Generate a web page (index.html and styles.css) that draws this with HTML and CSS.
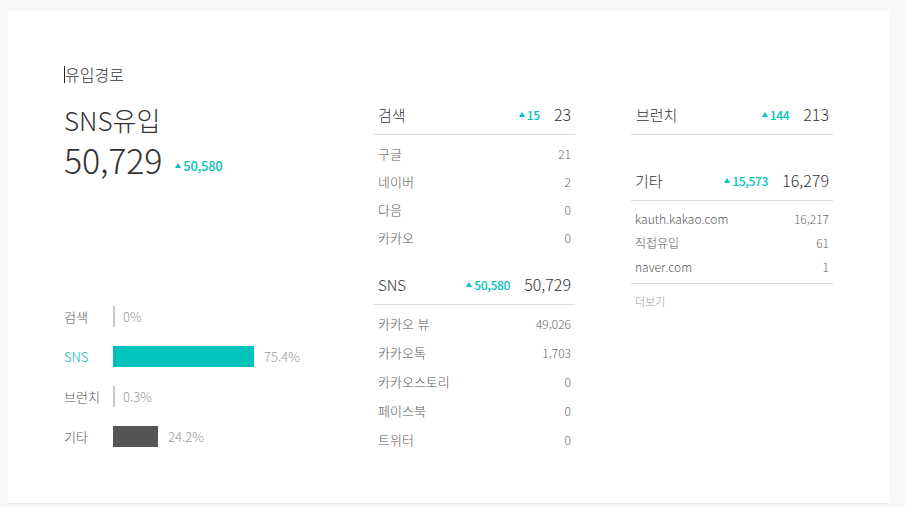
FILE: index.html
```html
<!DOCTYPE html>
<html lang="ko">
<head>
<meta charset="utf-8">
<link rel="stylesheet" href="styles.css">
</head>
<body>
<div class="card">
  <h2 class="title">유입경로</h2>
  <div class="grid">
    <div class="summary">
      <div class="sum-label">SNS유입</div>
      <div class="sum-value"><span class="big">50,729</span><span class="delta"><i class="tri"></i>50,580</span></div>
      <div class="chart">
        <div class="bar-row"><span class="bar-label">검색</span><span class="bar zero"></span><span class="pct">0%</span></div>
        <div class="bar-row active"><span class="bar-label">SNS</span><span class="bar teal" style="width:141px"></span><span class="pct">75.4%</span></div>
        <div class="bar-row"><span class="bar-label">브런치</span><span class="bar zero"></span><span class="pct">0.3%</span></div>
        <div class="bar-row"><span class="bar-label">기타</span><span class="bar dark" style="width:45px"></span><span class="pct">24.2%</span></div>
      </div>
    </div>

    <div class="col">
      <div class="section">
        <div class="head"><span class="head-label">검색</span><span class="delta"><i class="tri"></i>15</span><span class="total">23</span></div>
        <ul class="list">
          <li><span>구글</span><span>21</span></li>
          <li><span>네이버</span><span>2</span></li>
          <li><span>다음</span><span>0</span></li>
          <li><span>카카오</span><span>0</span></li>
        </ul>
      </div>
      <div class="section second">
        <div class="head"><span class="head-label">SNS</span><span class="delta"><i class="tri"></i>50,580</span><span class="total">50,729</span></div>
        <ul class="list tall">
          <li><span>카카오 뷰</span><span>49,026</span></li>
          <li><span>카카오톡</span><span>1,703</span></li>
          <li><span>카카오스토리</span><span>0</span></li>
          <li><span>페이스북</span><span>0</span></li>
          <li><span>트위터</span><span>0</span></li>
        </ul>
      </div>
    </div>

    <div class="col">
      <div class="section">
        <div class="head"><span class="head-label">브런치</span><span class="delta"><i class="tri"></i>144</span><span class="total">213</span></div>
      </div>
      <div class="section etc">
        <div class="head"><span class="head-label">기타</span><span class="delta"><i class="tri"></i>15,573</span><span class="total">16,279</span></div>
        <ul class="list small">
          <li><span>kauth.kakao.com</span><span>16,217</span></li>
          <li><span>직접유입</span><span>61</span></li>
          <li><span>naver.com</span><span>1</span></li>
        </ul>
        <a class="more">더보기</a>
      </div>
    </div>
  </div>
</div>
</body>
</html>
```

FILE: styles.css
```css
* { box-sizing: border-box; }
html, body { margin: 0; padding: 0; }
body {
  background: #f7f7f7;
  padding: 11px 16px 0 8px;
  font-family: "Noto Sans CJK KR", "Noto Sans", sans-serif;
  font-weight: 300;
  color: #333;
}
.card {
  background: #fff;
  height: 493px;
  border-bottom: 1px solid #ebebeb;
  padding: 55px 56px 0 56px;
}
.title {
  margin: 0;
  font-size: 16px;
  font-weight: 300;
  line-height: 17px;
  height: 17px;
  color: #333;
  border-left: 1px solid #222;
  padding-left: 0;
  display: block;
  width: fit-content;
}
.grid {
  display: grid;
  grid-template-columns: 253px 202px 202px;
  column-gap: 56px;
  margin-top: 11px;
}
.summary { padding-top: 9px; }
.sum-label { font-size: 26px; line-height: 34px; color: #333; }
.sum-value { display: flex; align-items: center; height: 46px; }
.big { font-size: 34px; line-height: 46px; color: #333; letter-spacing: -0.2px; }
.sum-value .delta { margin-left: 13px; margin-top: 10px; font-size: 13px; }
.delta {
  color: #00c3bb;
  font-size: 12px;
  font-weight: 500;
  display: inline-flex;
  align-items: center;
  letter-spacing: -0.3px;
}
.tri {
  display: inline-block;
  width: 0; height: 0;
  border-left: 3px solid transparent;
  border-right: 3px solid transparent;
  border-bottom: 5px solid #00c3bb;
  margin-right: 2px;
}
.chart { margin-top: 113px; }
.bar-row { display: flex; align-items: center; height: 40px; font-size: 13px; }
.bar-label { width: 49px; color: #555; }
.bar-row.active .bar-label { color: #00b8b0; }
.bar { height: 21px; display: inline-block; }
.bar.zero { width: 2px; background: #c8c8c8; }
.bar.teal { background: #00c4bc; }
.bar.dark { background: #555; }
.pct { margin-left: 10px; color: #999; }
.bar.zero + .pct { margin-left: 8px; }

.head {
  display: flex;
  align-items: center;
  height: 41px;
  padding: 0 4px 0 5px;
  border-bottom: 1px solid #ddd;
}
.head-label { font-size: 15px; color: #333; flex: 1; }
.head .delta { margin-right: 14px; }
.total { font-size: 16px; color: #333; }
.list { list-style: none; margin: 0; padding: 4px 4px 0 5px; }
.list li { display: flex; justify-content: space-between; height: 28px; align-items: center; font-size: 13px; color: #5a5a5a; }
.list.tall li { height: 29px; }
.list li span:last-child { font-size: 12px; color: #666; }
.section.second { margin-top: 13px; }
.section.etc { margin-top: 25px; }
.list.small { padding: 5px 4px 5px 4px; border-bottom: 1px solid #ddd; }
.list.small li { height: 24px; font-size: 12px; }
.list.small li span:last-child { font-size: 12px; }
.etc .head { padding-left: 4px; }
.more { display: block; margin-top: 9px; margin-left: 4px; font-size: 11px; line-height: 16px; color: #999; }
```
